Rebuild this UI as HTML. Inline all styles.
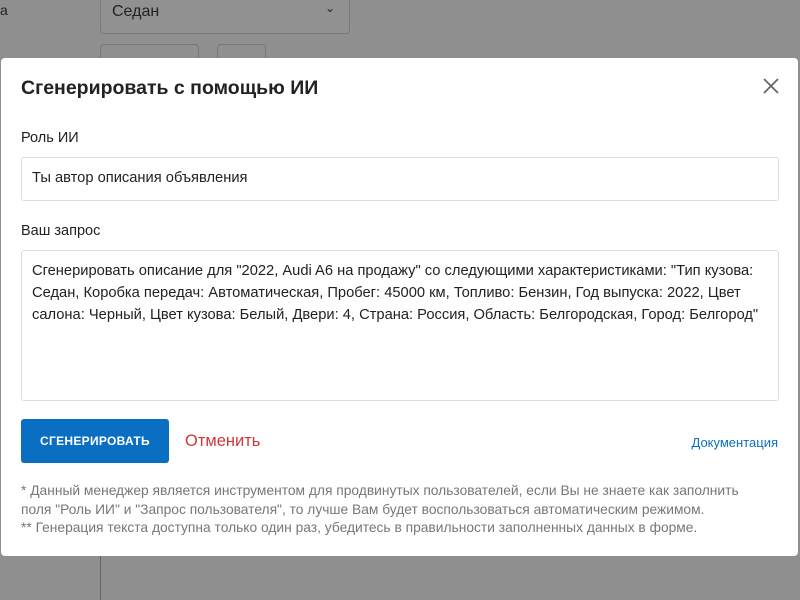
<!DOCTYPE html>
<html><head><meta charset="utf-8"><style>
*{box-sizing:border-box;margin:0;padding:0}
body{width:800px;height:600px;overflow:hidden;background:#8f8f8f;font-family:"Liberation Sans","DejaVu Sans",sans-serif;position:relative;color:#222}
.bg-sel{position:absolute;left:100px;top:-10px;width:250px;height:44px;border:1px solid #7a7a7a;border-radius:4px;background:#919191;font-size:16px;padding:12px 0 0 11px;color:#222}
.bg-sel span{position:absolute;right:14px;top:10px;font-size:12px}
.b2{position:absolute;left:100px;top:44px;width:99px;height:30px;border:1px solid #7a7a7a;border-radius:4px}
.b3{position:absolute;left:217px;top:44px;width:49px;height:30px;border:1px solid #7a7a7a;border-radius:4px}
.la{position:absolute;left:0;top:2px;font-size:14px}
.vl{position:absolute;left:100px;top:556px;width:1px;height:44px;background:#666}
.modal{position:absolute;left:1px;top:58px;width:797px;height:498px;background:#fff;border-radius:4px}
h1{position:absolute;left:20px;top:19px;font-size:19.5px;font-weight:bold;color:#222}
.x{position:absolute;left:760px;top:18px;width:20px;height:20px}
.lbl{position:absolute;left:20px;font-size:14.5px;color:#222}
.inp{position:absolute;left:20px;width:758px;border:1px solid #ddd;border-radius:3px;font-size:14.7px;color:#222}
.btn{position:absolute;left:20px;top:361px;width:148px;height:44px;background:#0a6fc2;border-radius:3px;color:#fff;font-size:12px;font-weight:bold;text-align:center;line-height:44px;letter-spacing:.3px}
.cancel{position:absolute;left:184px;top:374px;font-size:16.5px;color:#d0373c}
.doc{position:absolute;right:20px;top:377px;font-size:13px;color:#0a6fc2}
.note{position:absolute;left:20px;top:424px;width:770px;font-size:13.8px;line-height:18.5px;color:#777}
</style></head><body>
<div class="la">а</div>
<div class="bg-sel">Седан<span>⌄</span></div>
<div class="b2"></div><div class="b3"></div>
<div class="vl"></div>
<div class="modal">
<h1>Сгенерировать с помощью ИИ</h1>
<svg class="x" viewBox="0 0 20 20"><path d="M3 3L17 17M17 3L3 17" stroke="#666" stroke-width="1.8"/></svg>
<div class="lbl" style="top:72px">Роль ИИ</div>
<div class="inp" style="top:99px;height:44px;padding:12px 10px">Ты автор описания объявления</div>
<div class="lbl" style="top:165px">Ваш запрос</div>
<div class="inp" style="top:192px;height:151px;padding:9px 10px;line-height:22px">Сгенерировать описание для "2022, Audi A6 на продажу" со следующими характеристиками: "Тип кузова: Седан, Коробка передач: Автоматическая, Пробег: 45000 км, Топливо: Бензин, Год выпуска: 2022, Цвет салона: Черный, Цвет кузова: Белый, Двери: 4, Страна: Россия, Область: Белгородская, Город: Белгород"</div>
<div class="btn">СГЕНЕРИРОВАТЬ</div>
<div class="cancel">Отменить</div>
<div class="doc">Документация</div>
<div class="note">* Данный менеджер является инструментом для продвинутых пользователей, если Вы не знаете как заполнить<br>поля "Роль ИИ" и "Запрос пользователя", то лучше Вам будет воспользоваться автоматическим режимом.<br>** Генерация текста доступна только один раз, убедитесь в правильности заполненных данных в форме.</div>
</div>
</body></html>
